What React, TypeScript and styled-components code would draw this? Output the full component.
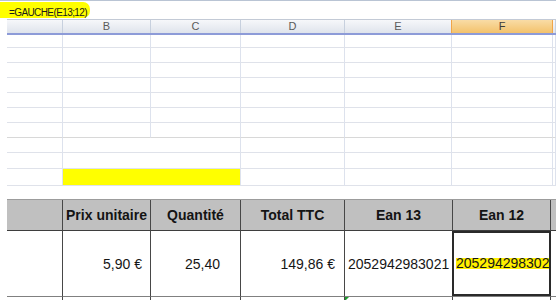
import React from "react";
import styled, { createGlobalStyle, css } from "styled-components";

const GlobalStyle = createGlobalStyle`
  html, body { margin: 0; padding: 0; background: #ffffff; }
  body { font-family: "Liberation Sans", Arial, sans-serif; }
`;

const SHEET_COLS = "56px 88px 90px 104px 107px 101px 1fr";
const TABLE_COLS = "56px 88px 90px 104px 108px 98px 1fr";

const Page = styled.div`
  width: 556px;
  height: 300px;
  overflow: hidden;
  background: #ffffff;
  display: flex;
  flex-direction: column;
`;

const FormulaBar = styled.div`
  height: 19px;
  flex: none;
  display: flex;
  align-items: flex-start;
  background: linear-gradient(#b9c4d4, #b9c4d4) top left / 100% 1px no-repeat;
`;

const FormulaText = styled.span`
  display: inline-block;
  box-sizing: border-box;
  margin-top: 2px;
  height: 16px;
  padding: 4px 3px 0 9px;
  background: #ffff00;
  border-radius: 0 7px 7px 0;
  font-family: "Liberation Sans", Arial, sans-serif;
  font-size: 10px;
  letter-spacing: -0.6px;
  line-height: 13px;
  color: #1a1a1a;
  white-space: nowrap;
`;

const ColumnHeader = styled.div`
  flex: none;
  display: grid;
  grid-template-columns: ${SHEET_COLS};
  height: 16px;
  box-sizing: border-box;
  margin-left: 7px;
  border-top: 1px solid #c3cad6;
  border-bottom: 2px solid #8d9bd8;
`;

const HeaderCell = styled.div<{ $active?: boolean }>`
  box-sizing: border-box;
  border-right: 1px solid #c7d0de;
  background: linear-gradient(#f6f7fa, #dfe4ec);
  font-family: "Liberation Sans", Arial, sans-serif;
  font-size: 11px;
  line-height: 13px;
  text-align: center;
  color: #5a5a5a;
  ${(p) =>
    p.$active &&
    css`
      background: linear-gradient(#f9dca6, #f3c26b);
      border-right-color: #f0a548;
      box-shadow: -1px 0 0 #f0a548;
      color: #3c3c3c;
    `}
`;

const GridRow = styled.div<{ $h: number }>`
  flex: none;
  display: grid;
  grid-template-columns: ${SHEET_COLS};
  height: ${(p) => p.$h}px;
  margin-left: 7px;
`;

const GridCell = styled.div<{ $span?: number; $fill?: string; $line?: string }>`
  box-sizing: border-box;
  grid-column: span ${(p) => p.$span ?? 1};
  border-right: 1px solid #dde2ed;
  border-bottom: 1px solid ${(p) => p.$line ?? "#dfe2ea"};
  background: ${(p) => p.$fill ?? "transparent"};
`;

const Spacer = styled.div<{ $h: number }>`
  flex: none;
  height: ${(p) => p.$h}px;
`;

const Table = styled.div`
  flex: 1;
  display: grid;
  grid-template-columns: ${TABLE_COLS};
  grid-template-rows: 31px 66px 1fr;
  margin-left: 7px;
  border-top: 1px solid #9c9c9c;
`;

const TH = styled.div<{ $last?: boolean }>`
  box-sizing: border-box;
  display: flex;
  align-items: center;
  justify-content: center;
  background: #c0c0c0;
  border-right: ${(p) => (p.$last ? "none" : "1px solid #474747")};
  border-bottom: 1px solid #3e3e3e;
  font-family: "Liberation Sans", Arial, sans-serif;
  font-weight: 700;
  font-size: 14px;
  color: #141414;
  white-space: nowrap;
`;

const TD = styled.div<{ $align?: "left" | "right"; $pad?: number; $last?: boolean; $selected?: boolean }>`
  position: relative;
  box-sizing: border-box;
  display: flex;
  align-items: center;
  justify-content: ${(p) => (p.$align === "left" ? "flex-start" : "flex-end")};
  padding: ${(p) => (p.$align === "left" ? `0 0 0 ${p.$pad ?? 3}px` : `0 ${p.$pad ?? 8}px 0 0`)};
  background: #ffffff;
  border-right: ${(p) => (p.$last ? "none" : "1px solid #474747")};
  border-bottom: 1px solid #808080;
  font-family: "Liberation Sans", Arial, sans-serif;
  font-size: 14px;
  color: #161616;
  white-space: nowrap;
  ${(p) =>
    p.$selected &&
    css`
      &::after {
        content: "";
        position: absolute;
        top: 0;
        bottom: 0;
        left: -1px;
        right: -1px;
        border: 2px solid #2a2a2a;
        pointer-events: none;
      }
    `}
`;

const TailCell = styled.div<{ $last?: boolean }>`
  box-sizing: border-box;
  border-right: ${(p) => (p.$last ? "none" : "1px solid #474747")};
`;

const ErrorMark = styled.div`
  width: 0;
  height: 0;
  border-top: 4px solid #1f9a2e;
  border-right: 4px solid transparent;
`;

const Marked = styled.span`
  display: inline-block;
  line-height: 11px;
  background: #fff000;
`;

const headers = ["", "B", "C", "D", "E", "F", ""];
const rowHeights = [13, 15, 15, 15, 15, 15, 15];

export default function App() {
  return (
    <Page>
      <GlobalStyle />
      <FormulaBar>
        <FormulaText>=GAUCHE(E13;12)</FormulaText>
      </FormulaBar>

      <ColumnHeader>
        {headers.map((h, i) => (
          <HeaderCell key={i} $active={h === "F"}>
            {h}
          </HeaderCell>
        ))}
      </ColumnHeader>

      {rowHeights.map((h, r) => (
        <GridRow key={r} $h={h}>
          {headers.map((_, c) => (
            <GridCell key={c} $line={r === 6 ? "#d8d8d8" : undefined} />
          ))}
        </GridRow>
      ))}

      <GridRow $h={15}>
        <GridCell />
        <GridCell $span={2} />
        <GridCell />
        <GridCell />
        <GridCell />
        <GridCell />
      </GridRow>
      <GridRow $h={16}>
        <GridCell />
        <GridCell $span={2} />
        <GridCell />
        <GridCell />
        <GridCell />
        <GridCell />
      </GridRow>
      <GridRow $h={17}>
        <GridCell />
        <GridCell $span={2} $fill="#ffff00" />
        <GridCell />
        <GridCell />
        <GridCell />
        <GridCell />
      </GridRow>
      <Spacer $h={13} />

      <Table>
        <TH />
        <TH>Prix unitaire</TH>
        <TH>Quantité</TH>
        <TH>Total TTC</TH>
        <TH>Ean 13</TH>
        <TH>Ean 12</TH>
        <TH $last />

        <TD />
        <TD $pad={8}>5,90 €</TD>
        <TD $pad={20}>25,40</TD>
        <TD $pad={9}>149,86 €</TD>
        <TD $align="left" $pad={3}>2052942983021</TD>
        <TD $align="left" $pad={3} $selected>
          <Marked>205294298302</Marked>
        </TD>
        <TD $last />

        <TailCell />
        <TailCell />
        <TailCell />
        <TailCell />
        <TailCell>
          <ErrorMark />
        </TailCell>
        <TailCell />
        <TailCell $last />
      </Table>
    </Page>
  );
}
